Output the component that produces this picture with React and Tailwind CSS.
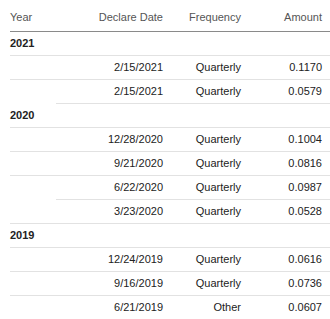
import React from 'react';

const groups = [
  {
    year: '2021',
    rows: [
      { date: '2/15/2021', freq: 'Quarterly', amount: '0.1170', yearLine: true },
      { date: '2/15/2021', freq: 'Quarterly', amount: '0.0579', yearLine: false },
    ],
  },
  {
    year: '2020',
    rows: [
      { date: '12/28/2020', freq: 'Quarterly', amount: '0.1004', yearLine: true },
      { date: '9/21/2020', freq: 'Quarterly', amount: '0.0816', yearLine: true },
      { date: '6/22/2020', freq: 'Quarterly', amount: '0.0987', yearLine: false },
      { date: '3/23/2020', freq: 'Quarterly', amount: '0.0528', yearLine: true },
    ],
  },
  {
    year: '2019',
    rows: [
      { date: '12/24/2019', freq: 'Quarterly', amount: '0.0616', yearLine: true },
      { date: '9/16/2019', freq: 'Quarterly', amount: '0.0736', yearLine: true },
      { date: '6/21/2019', freq: 'Other', amount: '0.0607', yearLine: false, last: true },
    ],
  },
];

function DataRow({ row }) {
  const line = row.last ? 'border-transparent' : 'border-[#e2e2e2]';
  return (
    <div className="flex h-[24px]">
      <div className={`w-[46px] border-b ${row.yearLine ? 'border-[#e2e2e2]' : 'border-transparent'}`} />
      <div className={`flex flex-1 items-center border-b ${line}`}>
        <div className="w-[115px] pr-2 text-right">{row.date}</div>
        <div className="w-[78px] pr-2 text-right">{row.freq}</div>
        <div className="flex-1 pr-2 text-right">{row.amount}</div>
      </div>
    </div>
  );
}

export default function App() {
  return (
    <div
      className="h-[319px] w-[330px] bg-white pl-[10px] text-[11px] text-[#222]"
      style={{ fontFamily: '"Liberation Sans", Arial, sans-serif' }}
    >
      {/* Header */}
      <div className="flex h-[32px] items-end border-b border-[#8a8a8a] pb-[6px] text-[#555]">
        <div className="w-[46px]">Year</div>
        <div className="w-[115px] pr-2 text-right">Declare Date</div>
        <div className="w-[78px] pr-2 text-right">Frequency</div>
        <div className="flex-1 pr-2 text-right">Amount</div>
      </div>

      {groups.map((g) => (
        <div key={g.year}>
          <div className="flex h-[24px] items-center border-b border-[#e2e2e2] font-bold">
            {g.year}
          </div>
          {g.rows.map((r, i) => (
            <DataRow key={i} row={r} />
          ))}
        </div>
      ))}
    </div>
  );
}
